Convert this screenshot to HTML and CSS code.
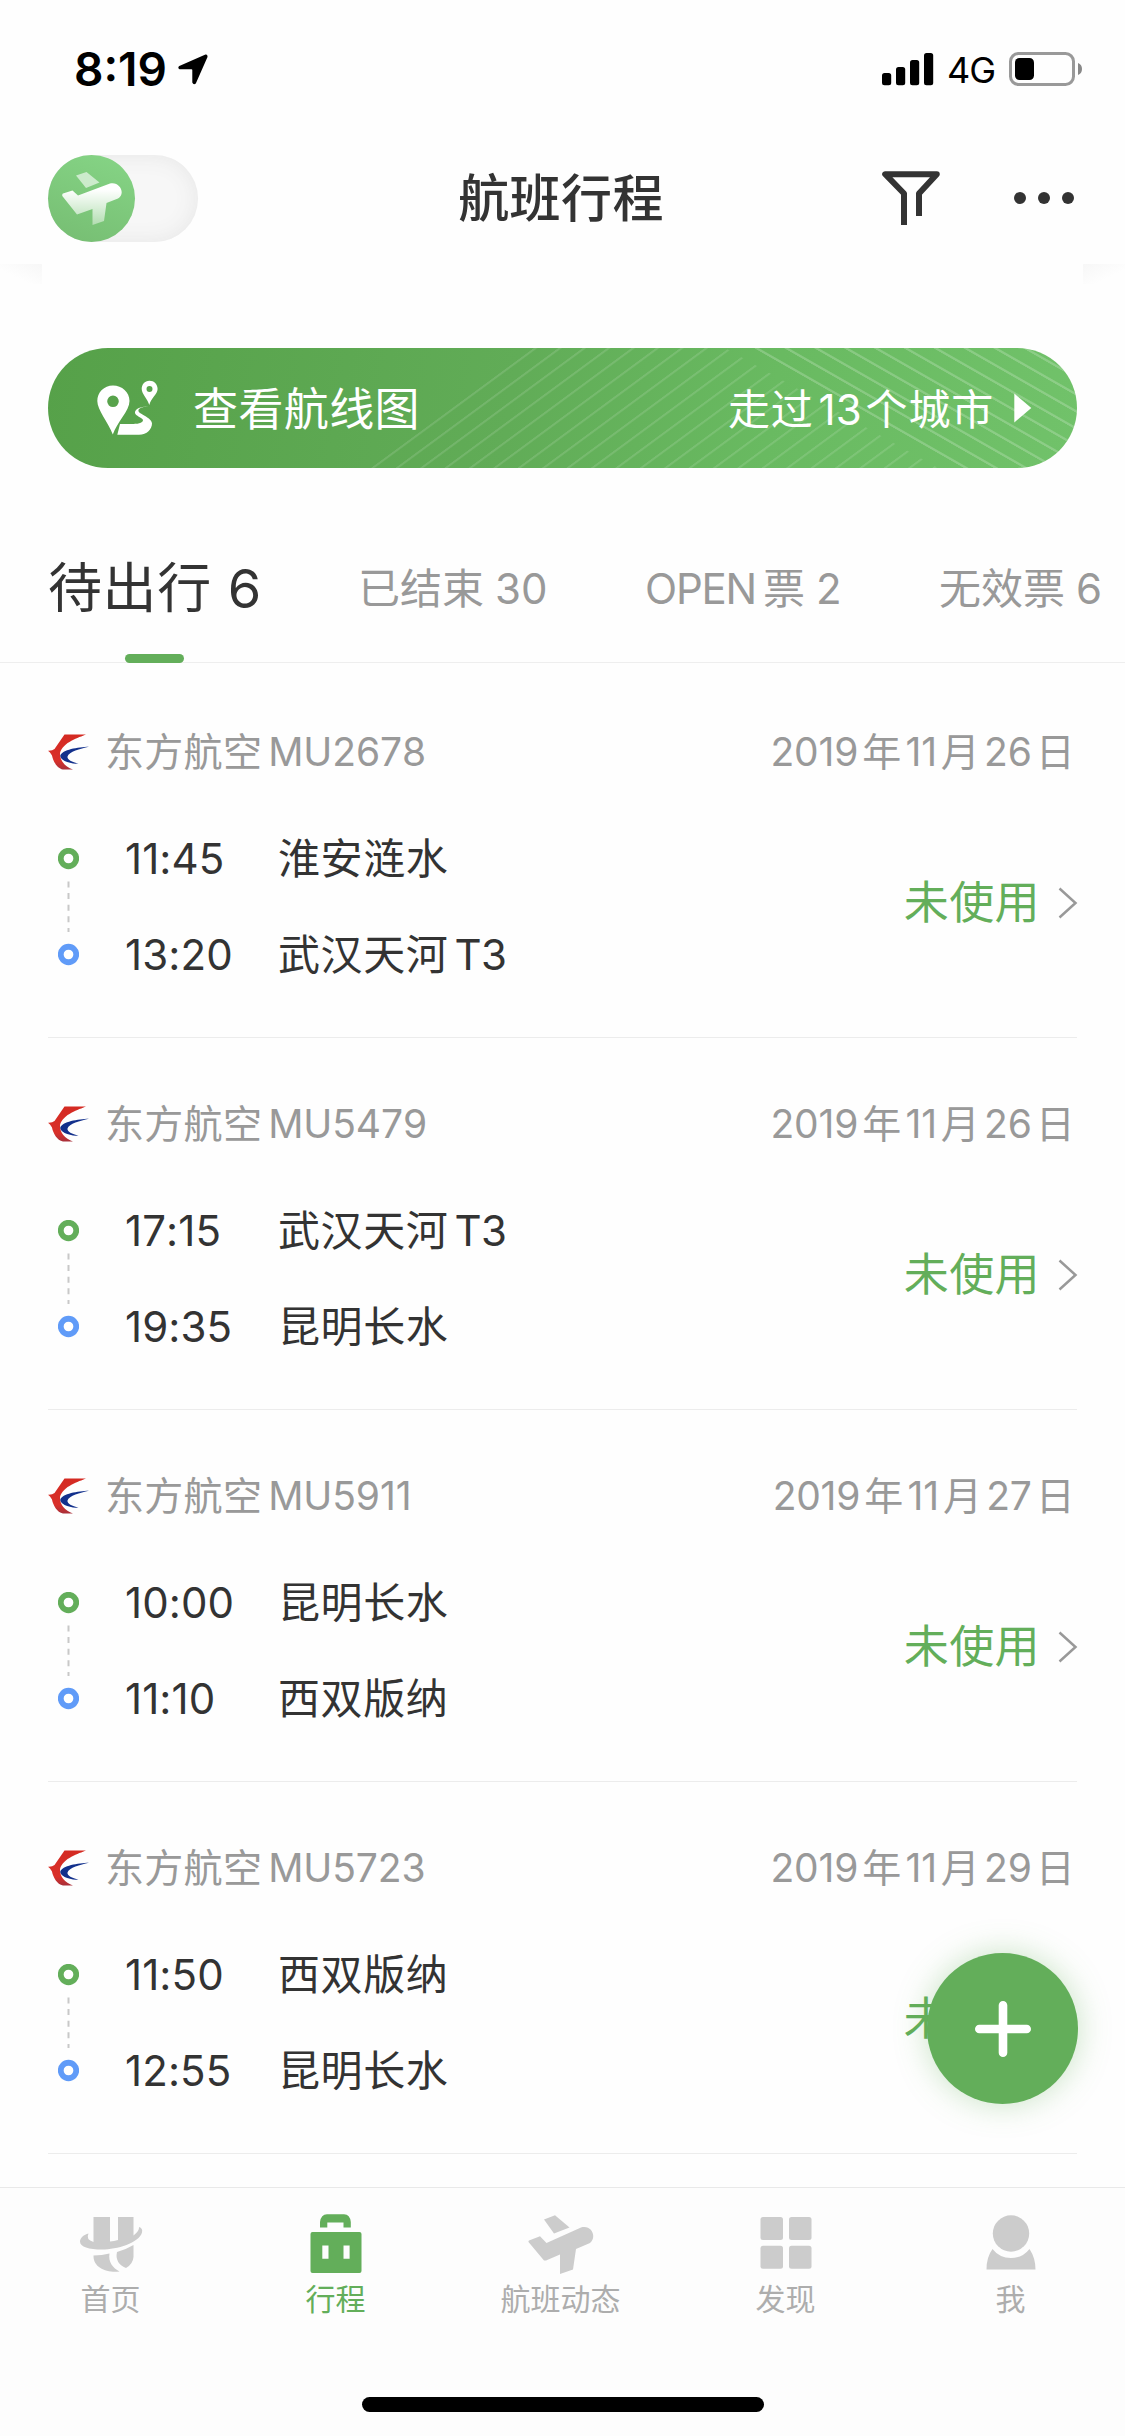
FILE: index.html
```html
<!DOCTYPE html>
<html lang="zh-CN">
<head>
<meta charset="utf-8">
<title>航班行程</title>
<link rel="stylesheet" href="styles.css">
</head>
<body>
<svg class="defs" width="0" height="0">
  <defs>
    <linearGradient id="red" x1="0" y1="0" x2="0" y2="1"><stop offset="0" stop-color="#d42a22"/><stop offset=".75" stop-color="#d9302a"/><stop offset="1" stop-color="#a8303a"/></linearGradient>
    <linearGradient id="fade" x1="0" y1="0" x2="0" y2="1"><stop offset=".15" stop-color="#fff"/><stop offset="1" stop-color="#fff" stop-opacity=".42"/></linearGradient>
    <symbol id="airline" viewBox="0 0 41 36">
      <path fill="url(#red)" d="M16.500 .5H38C31 3.500 15 8 12 19C11.500 26 17 33 25 35.500H15C9 34.500 5 27 4 21.500Q2 18 0 16.800Q4.500 17 6.500 15Z"/>
      <path fill="#12308c" d="M41 12.800C30 13.300 14 15.500 12.200 22C13 27.500 24 29.800 30.500 30C24 27.500 19 26 19.500 22.500C21 17.500 32 15 41 12.800Z"/>
    </symbol>
    <symbol id="route" viewBox="0 0 21 118">
      <circle cx="10.500" cy="10.500" r="7.750" fill="#fff" stroke="#63ae5a" stroke-width="5.800"/>
      <path d="M10.500 33.500V84" stroke="#c8c8c8" stroke-width="2" stroke-dasharray="6 5.600"/>
      <circle cx="10.500" cy="106.500" r="7.750" fill="#fff" stroke="#609bf8" stroke-width="5.800"/>
    </symbol>
    <symbol id="chevron" viewBox="0 0 20 32"><path d="M1.500 1.500L17.500 16L1.500 30.500" fill="none" stroke="#999" stroke-width="2.500"/></symbol>
  </defs>
</svg>
<div class="app">
  <div class="status-bar">
    <div class="clock"><span>8:19</span>
      <svg width="30" height="31" viewBox="0 0 30 31"><path d="M27.500.6L1.300 12Q-.8 13.800 1.500 15.200H13.500Q14.300 15.200 14.300 16V28.500Q15.500 31.500 17.800 29.500L29.500 3Q29.700.2 27.500.6Z"/></svg>
    </div>
    <div class="signals">
      <svg width="52" height="33" viewBox="0 0 52 33"><rect y="20" width="9.200" height="12.300" rx="2.500"/><rect x="14" y="14" width="9.200" height="18.300" rx="2.500"/><rect x="28" y="7" width="9.200" height="25.300" rx="2.500"/><rect x="42" width="9.200" height="32.300" rx="2.500"/></svg>
      <span class="network">4G</span>
      <svg width="74" height="34" viewBox="0 0 74 34"><rect x="1.500" y="1.500" width="63" height="31" rx="8" fill="none" stroke="#999" stroke-width="3"/><rect x="6" y="6" width="19" height="22" rx="4.500"/><path d="M69 11Q73 12.500 73 17T69 23Z" fill="#888"/></svg>
    </div>
  </div>

  <header class="header">
    <div class="toggle"><div class="knob">
      <svg width="60" height="54" viewBox="0 0 60 54"><path fill="#fff" fill-opacity=".6" d="M14 3.500L24.500 0L37.500 10.500L24 16Z"/><path fill="url(#fade)" d="M1 21.500L10.500 18.500L16 23.500L48 11.500C58 9 64 22 56 26.500L44.500 31L42 49L30.500 53V37L15 42.500L.3 24Q0 22 1 21.500Z"/></svg>
    </div></div>
    <h1 class="title">航班行程</h1>
    <div class="actions">
      <svg width="58" height="55" viewBox="0 0 58 55"><path d="M22 54V22.500L3.200 3.200H54.800L37 22.500V45" fill="none" stroke="#333" stroke-width="6" stroke-linejoin="round"/></svg>
      <svg width="60" height="14" viewBox="0 0 60 14" fill="#333"><circle cx="6" cy="7" r="6"/><circle cx="30" cy="7" r="6"/><circle cx="54" cy="7" r="6"/></svg>
    </div>
  </header>

  <div class="banner-wrap">
    <i class="shade shade-left"></i><i class="shade shade-right"></i>
    <a class="banner">
      <svg class="stripes" width="1029" height="120" viewBox="0 0 1029 120">
        <defs>
          <pattern id="rise" width="24.400" height="120" patternUnits="userSpaceOnUse" patternTransform="translate(323 120) skewX(-53.640)"><rect width="3.400" height="120" fill="#fff" fill-opacity=".12"/></pattern>
          <pattern id="fall" width="29.850" height="120" patternUnits="userSpaceOnUse" patternTransform="translate(706 0) skewX(60.260)"><rect width="4.600" height="120" fill="#fff" fill-opacity=".2"/></pattern>
        </defs>
        <path fill="url(#rise)" d="M322 120L485 0H677L890 120Z"/>
        <path fill="url(#fall)" d="M705 0H1029V120H915Z"/>
      </svg>
      <svg class="pins" width="62" height="56" viewBox="0 0 62 56" fill="#fff">
        <path fill-rule="evenodd" d="M16 5.500C7 5.500.3 12.500.3 21C.3 30 11 42 15.800 54.500C20 42 32.500 31 32.500 21C32.500 12 25 5.500 16 5.500ZM16 15.500A5.800 5.800 0 1 1 16 27.100A5.800 5.800 0 1 1 16 15.500Z"/>
        <path fill-rule="evenodd" d="M52.500.7C47.500.7 44.700 4.600 44.700 9C44.700 14 50.500 18.500 52.300 25C54 18 60.600 14 60.600 9C60.600 4 57 .7 52.500.7ZM52.500 6A3 3 0 1 1 52.500 12A3 3 0 1 1 52.500 6Z"/>
        <path d="M51.500 26.300C43 26.500 37.500 29.500 38 33C38.500 36 45 37.500 46 40C46 43.500 40 44 34 44H23L20.300 54.800H42C50 54.800 55 49 55 43.500C55 37 40 34 41.500 30C42.500 27.500 47 27 51.500 26.300Z"/>
      </svg>
      <span class="banner-title">查看航线图</span>
      <span class="banner-info">走过<b class="n13">13</b>个城市</span>
      <svg class="play" width="18" height="30" viewBox="0 0 18 30"><path d="M.3.5L17.300 15L.3 29.500Z" fill="#fff"/></svg>
    </a>
  </div>

  <nav class="tabs">
    <a class="tab active">待出行<b class="count">6</b></a>
    <a class="tab">已结束<b class="count">30</b></a>
    <a class="tab"><b class="open">OPEN</b>票<b class="count">2</b></a>
    <a class="tab">无效票<b class="count">6</b></a>
  </nav>

  <main class="list">
    <article class="trip">
      <div class="trip-head"><svg class="logo"><use href="#airline"/></svg><span>东方航空<b class="num">MU2678</b></span><time><b>2019</b>年<b>11</b>月<b>26</b>日</time></div>
      <div class="trip-body"><svg class="route"><use href="#route"/></svg>
        <div class="stops"><b>11:45</b><span>淮安涟水</span><b>13:20</b><span>武汉天河<b class="term">T3</b></span></div>
        <div class="state">未使用<svg class="chevron"><use href="#chevron"/></svg></div></div>
    </article>
    <article class="trip">
      <div class="trip-head"><svg class="logo"><use href="#airline"/></svg><span>东方航空<b class="num">MU5479</b></span><time><b>2019</b>年<b>11</b>月<b>26</b>日</time></div>
      <div class="trip-body"><svg class="route"><use href="#route"/></svg>
        <div class="stops"><b>17:15</b><span>武汉天河<b class="term">T3</b></span><b>19:35</b><span>昆明长水</span></div>
        <div class="state">未使用<svg class="chevron"><use href="#chevron"/></svg></div></div>
    </article>
    <article class="trip">
      <div class="trip-head"><svg class="logo"><use href="#airline"/></svg><span>东方航空<b class="num">MU5911</b></span><time><b>2019</b>年<b>11</b>月<b>27</b>日</time></div>
      <div class="trip-body"><svg class="route"><use href="#route"/></svg>
        <div class="stops"><b>10:00</b><span>昆明长水</span><b>11:10</b><span>西双版纳</span></div>
        <div class="state">未使用<svg class="chevron"><use href="#chevron"/></svg></div></div>
    </article>
    <article class="trip">
      <div class="trip-head"><svg class="logo"><use href="#airline"/></svg><span>东方航空<b class="num">MU5723</b></span><time><b>2019</b>年<b>11</b>月<b>29</b>日</time></div>
      <div class="trip-body"><svg class="route"><use href="#route"/></svg>
        <div class="stops"><b>11:50</b><span>西双版纳</span><b>12:55</b><span>昆明长水</span></div>
        <div class="state">未</div></div>
    </article>
  </main>

  <button class="fab"><svg width="60" height="60" viewBox="0 0 60 60"><path d="M30 6.300V53.700M6.300 30H53.700" stroke="#fff" stroke-width="8.600" stroke-linecap="round"/></svg></button>

  <footer class="tabbar">
    <div class="items">
      <a class="item"><svg width="64" height="60" viewBox="0 0 64 60"><g fill="#ccc"><path d="M14.500 3H31V27.500Q35 27 39 26V3H54.500V21.500Q60.500 17 60 13Q64 14 63 18.500C60 29 38 35.500 23 35.500C10 35.500 1 33 1 27.500C1 24 5 20.500 9.500 19.500Q6.500 25.500 14.500 28Z"/><path d="M14.500 41.500Q23 41.300 30.500 39.500C29 48 34 54 40.500 57.500C28 59 14.500 54 14.500 42Z"/><path d="M38 38Q47 35.500 54.500 31V43Q54 50 47 54Q35.500 49 38 38Z"/></g></svg>首页</a>
      <a class="item on"><svg width="64" height="60" viewBox="0 0 64 60" fill="#63ae5a"><path d="M16 13.500V8Q17 .5 23 .3H40Q46 .5 46.800 8V13.500H39.500V8.500H23.300V13.500Z"/><path fill-rule="evenodd" d="M8.500 18H55.500Q57.500 18 57.500 20V57Q57.500 59 55.500 59H8.500Q6.500 59 6.500 57V20Q6.500 18 8.500 18ZM18.300 31.500V44.700H24.500V31.500ZM39.500 31.500V44.700H45.600V31.500Z"/></svg>行程</a>
      <a class="item"><svg width="68" height="60" viewBox="0 0 68 60" fill="#ccc"><path d="M17 5.500L28 1.300L42.500 13.500L27 19.500Z"/><path d="M2 26.500L13 22.200L19.500 29L54 13.500C65 10.500 70 23 63 29L49 35L46 55.500L33 60V40.500L19 46.500L17 46.500L1.500 28Q1.300 27 2 26.500Z"/></svg>航班动态</a>
      <a class="item"><svg width="64" height="60" viewBox="0 0 64 60" fill="#ccc"><rect x="6.500" y="3" width="22.500" height="23" rx="2.500"/><rect x="35" y="3" width="22.500" height="23" rx="2.500"/><rect x="6.500" y="31.700" width="22.500" height="23" rx="2.500"/><rect x="35" y="31.700" width="22.500" height="23" rx="2.500"/></svg>发现</a>
      <a class="item"><svg width="64" height="60" viewBox="0 0 64 60" fill="#ccc"><circle cx="32" cy="19.500" r="18.200"/><path d="M13.500 35Q20.500 44 32 44T50.500 35Q56.500 44 56.500 55.500H7.500Q7.500 43 13.500 35Z"/></svg>我</a>
    </div>
    <div class="home-indicator"></div>
  </footer>
</div>
</body>
</html>
```
FILE: styles.css
```css
* { box-sizing: border-box; }
body { margin: 0; background: #fff; font-family: Inter, "Noto Sans CJK SC", sans-serif; color: #333; }
b { font-weight: 400; font-kerning: none; font-feature-settings: "calt" 0; }
svg { display: block; flex: none; }
.defs { position: absolute; }
.app { position: relative; width: 1125px; height: 2436px; overflow: hidden; display: flex; flex-direction: column; background: #fefefe; white-space: nowrap; }

.status-bar { height: 138px; flex: none; display: flex; justify-content: space-between; align-items: center; padding: 0 42px 0 74px; color: #000; }
.clock { display: flex; align-items: center; gap: 11px; font-size: 46px; font-weight: 600; letter-spacing: 0; }
.signals { display: flex; align-items: center; }
.network { font-size: 36px; line-height: 40px; margin: 2px 14px 0 13px; letter-spacing: -1px; }

.header { height: 126px; flex: none; display: grid; grid-template-columns: 1fr auto 1fr; align-items: center; padding: 0 51px 6px 48px; }
.toggle { width: 150px; height: 87px; margin-top: 1px; border-radius: 44px; background: #f7f7f7; box-shadow: inset 0 0 22px #e6e6e6; }
.knob { width: 87px; height: 87px; border-radius: 50%; background: linear-gradient(200deg, #86d586, #76bd72); display: flex; align-items: center; justify-content: center; }
.title { margin: 2px 0 0; font-size: 51px; line-height: 60px; font-weight: 500; letter-spacing: .4px; }
.actions { display: flex; justify-content: flex-end; align-items: center; gap: 74px; }

.banner-wrap { position: relative; flex: none; height: 204px; padding: 84px 48px 0; }
.shade { position: absolute; top: 0; height: 20px; }
.shade-left { left: 0; width: 42px; background: linear-gradient(to top right, #fefefe 35%, #f7f7f7); }
.shade-right { right: 0; width: 42px; background: linear-gradient(to top left, #fefefe 35%, #f7f7f7); }
.banner { position: relative; height: 120px; border-radius: 60px; overflow: hidden; display: flex; align-items: center; padding: 0 45px 0 49px; color: #fff; background: linear-gradient(100deg, #56a149, #61ac57 45%, #69ba61 70%, #71c26a); }
.banner .stripes { position: absolute; left: 0; top: 0; }
.pins, .banner-title, .banner-info, .play { z-index: 1; }
.banner-title { margin-left: 34px; padding-bottom: 3px; font-size: 45px; letter-spacing: .4px; }
.banner-info { margin-left: auto; padding-bottom: 3px; font-size: 42px; letter-spacing: .8px; }
.n13 { margin: 0 4px 0 5px; letter-spacing: 0; }
.play { margin-left: 20px; }

.tabs { position: relative; height: 195px; flex: none; display: grid; grid-template-columns: 310px 287px 294px 1fr; align-items: center; padding: 48px 0 0 48px; border-bottom: 1px solid #eee; }
.tab { position: relative; font-size: 42px; line-height: 60px; color: #999; }
.tab.active { font-size: 54px; color: #333; letter-spacing: .6px; }
.tab.active::after { content: ""; position: absolute; left: 77px; bottom: -44px; width: 59px; height: 9px; border-radius: 4.500px; background: #63ae5a; }
.count { margin-left: 11px; }
.active .count { margin-left: 16px; }
.open { letter-spacing: -1.200px; margin-right: 7px; }

.list { flex: 1; min-height: 0; overflow: hidden; padding: 3px 48px 0; }
.trip { height: 372px; padding-top: 64px; border-bottom: 1px solid #ececec; }
.trip-head { height: 44px; display: flex; align-items: center; color: #999; font-size: 39px; line-height: 44px; letter-spacing: .3px; }
.logo { width: 41px; height: 36px; margin-right: 16px; }
.num { margin-left: 6px; letter-spacing: -.1px; }
.trip-head time { margin-left: auto; margin-right: 2px; }
.trip-head time b { margin: 0 4px; letter-spacing: -.2px; }
.trip-body { margin-top: 48px; height: 168px; display: flex; align-items: center; }
.route { width: 21px; height: 118px; margin: 2px 0 0 10px; }
.stops { margin: 2px 0 0 46px; display: grid; grid-template: 72px 72px / 153px auto; row-gap: 24px; align-items: center; font-size: 42px; line-height: 60px; letter-spacing: .6px; }
.stops > b { letter-spacing: .1px; }
.stops .term { margin-left: 6px; letter-spacing: -.5px; }
.state { margin-left: auto; padding-bottom: 7px; display: flex; align-items: center; font-size: 45px; line-height: 60px; letter-spacing: .4px; color: #63ae5a; }
.chevron { width: 20px; height: 32px; margin: 0 -1px 0 18px; }
.trip:last-child .state { margin-right: 128px; }

.fab { position: absolute; left: 927px; top: 1953px; width: 151px; height: 151px; border: 0; border-radius: 50%; background: #63ae5a; box-shadow: 0 0 32px rgba(99, 174, 90, .35); display: flex; align-items: center; justify-content: center; padding: 0; }

.tabbar { height: 249px; flex: none; border-top: 1px solid #e9e9e9; background: #fdfdfd; display: flex; flex-direction: column; align-items: center; }
.items { align-self: stretch; display: grid; grid-template-columns: repeat(5, 1fr); padding: 26px 2px 0 0; margin-left: -2px; }
.item { display: flex; flex-direction: column; align-items: center; gap: 5px; font-size: 30px; line-height: 40px; color: #adadad; }
.item.on { color: #63ae5a; }
.home-indicator { width: 402px; height: 15px; border-radius: 8px; background: #000; margin: 78px 0 0 1px; }
```
